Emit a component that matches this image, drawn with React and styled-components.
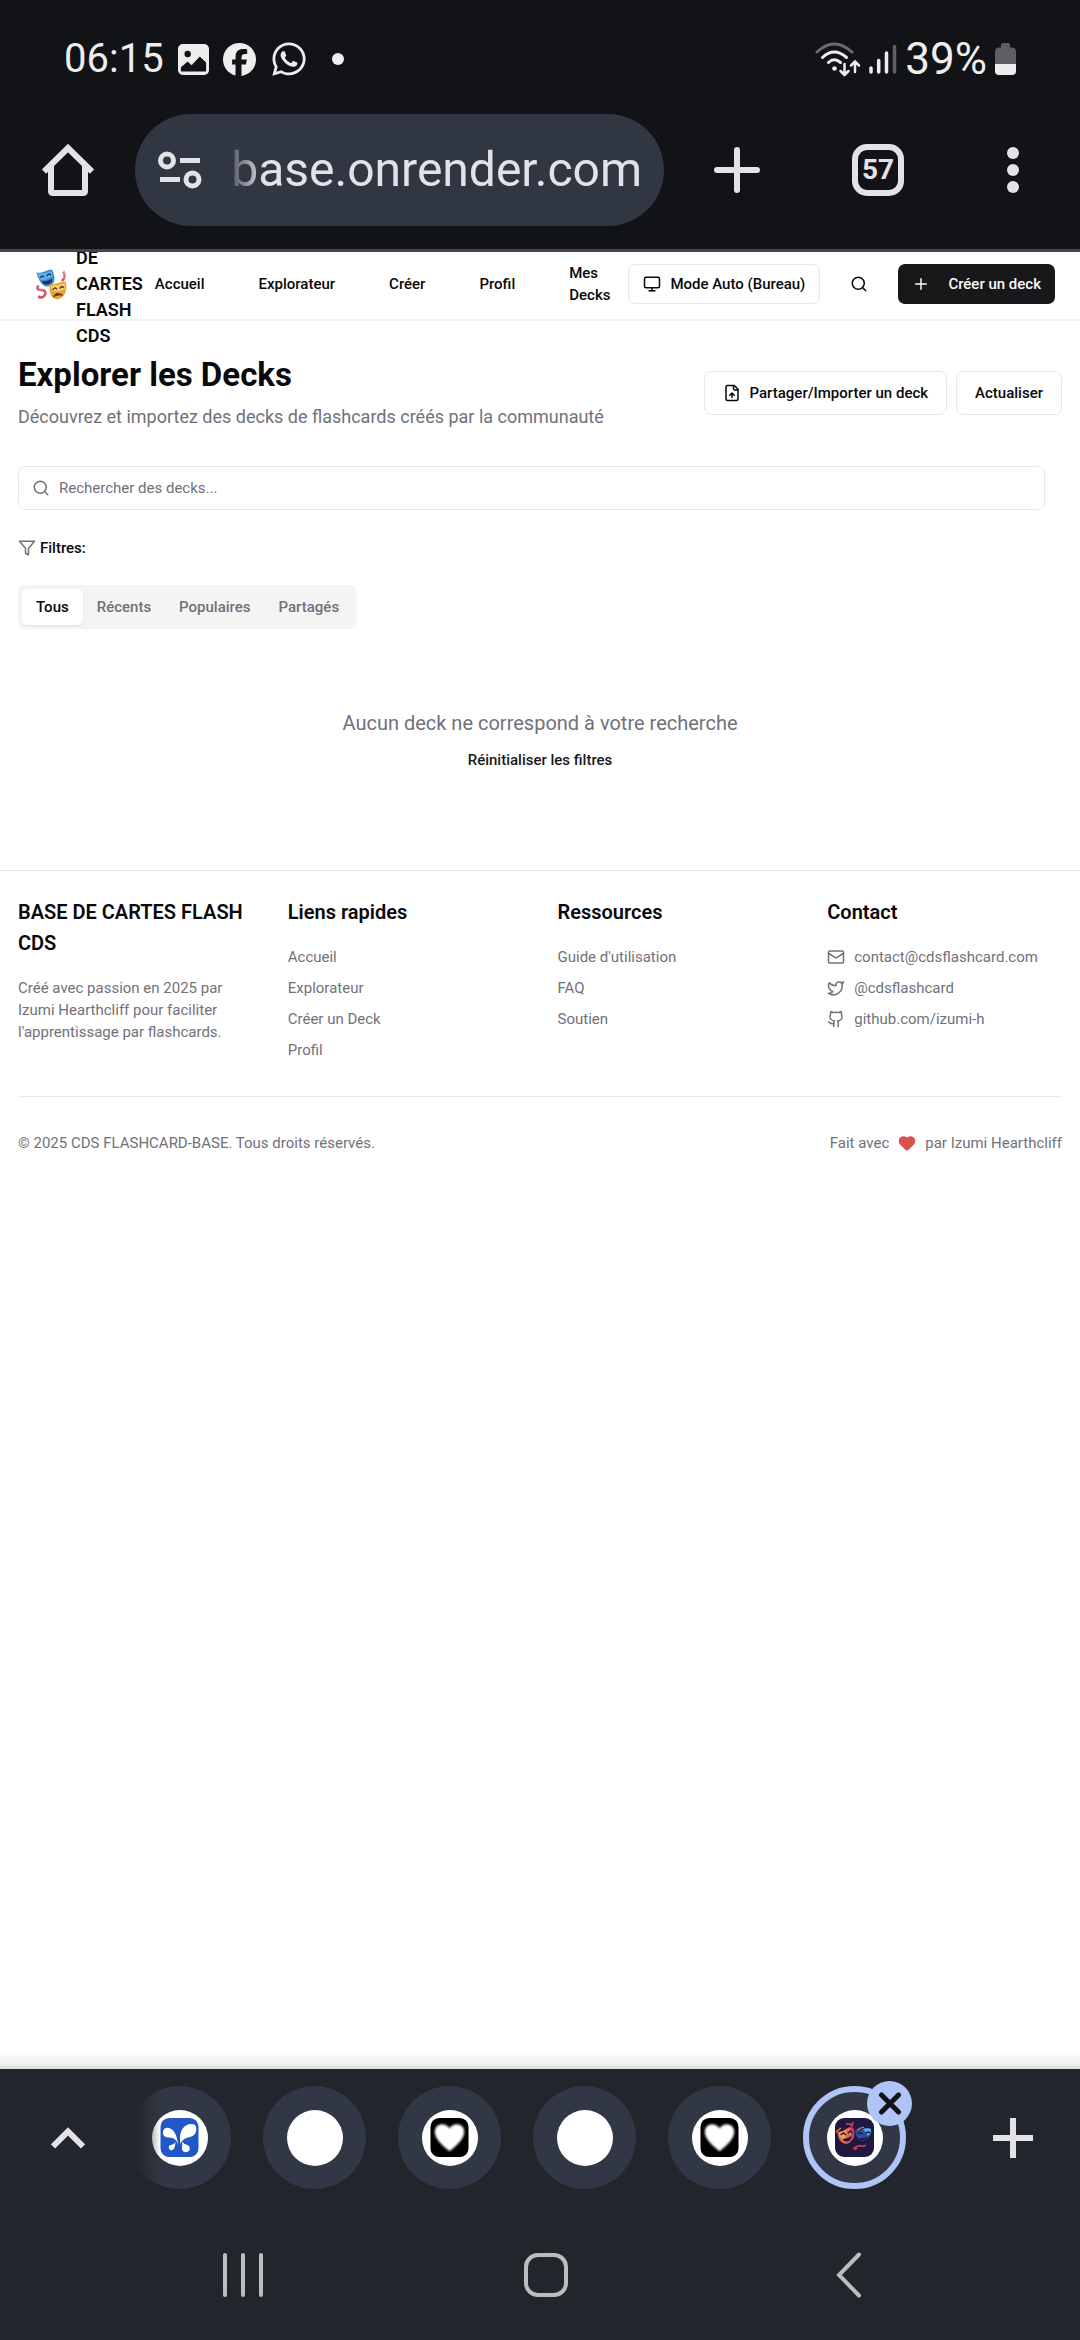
import React from "react";
import styled, { createGlobalStyle, css } from "styled-components";
import { Monitor, Search, Plus, Mail, Twitter, Github, Heart } from "lucide-react";
import { FaFacebook, FaWhatsapp } from "react-icons/fa6";

const ink = "#09090b";
const muted = "#71717a";
const line = "#e8e8ea";

const GlobalStyle = createGlobalStyle`
  *, *::before, *::after { box-sizing: border-box; }
  body { margin: 0; background: #fff; }
  body, button, input { font-family: Roboto, "Liberation Sans", sans-serif; }
  h1, h2, p, ul { margin: 0; padding: 0; }
  ul { list-style: none; }
  a { color: inherit; text-decoration: none; }
  button { margin: 0; padding: 0; border: 0; background: none; color: inherit; cursor: pointer; }
  svg { display: block; flex: none; }
`;

const Screen = styled.div`
  display: flex;
  flex-direction: column;
  min-height: 100vh;
  color: ${ink};
  font-size: 15px;
  line-height: 22px;
`;

/* Phone status bar and browser toolbar */

const Chrome = styled.div`
  background: #121317;
  color: #e3e2e9;
  border-bottom: 3px solid #45464d;
`;

const StatusBar = styled.div`
  display: flex;
  align-items: center;
  justify-content: space-between;
  height: 114px;
  padding: 4px 64px 0;
  color: #eeeeee;
`;

const StatusGroup = styled.div`
  display: flex;
  align-items: center;
  gap: ${(p) => p.$gap}px;
`;

const StatusText = styled.span`
  font-size: ${(p) => (p.$large ? 44 : 40)}px;
  line-height: 48px;
`;

const Toolbar = styled.div`
  display: flex;
  align-items: center;
  padding-bottom: 23px;
`;

const Slot = styled.button`
  display: flex;
  flex: none;
  align-items: center;
  justify-content: center;
  width: ${(p) => p.$width}px;
  height: 112px;
`;

const AddressBar = styled.div`
  display: flex;
  flex: 1;
  align-items: center;
  justify-content: space-between;
  min-width: 0;
  height: 112px;
  padding: 0 22px;
  border-radius: 56px;
  background: #313742;
`;

const Url = styled.span`
  padding-left: 8px;
  font-size: 48px;
  line-height: 64px;
  mask-image: linear-gradient(to right, transparent, #000 42px);
`;

const TabCount = styled.span`
  display: flex;
  align-items: center;
  justify-content: center;
  width: 52px;
  height: 52px;
  border: 6px solid #e3e2e9;
  border-radius: 15px;
  color: #e3e2e9;
  font-size: 28px;
  line-height: 32px;
  font-weight: 700;
`;

/* Web page */

const Page = styled.div`
  flex: 1;
  overflow: hidden;
  background: #fff;
`;

const Header = styled.header`
  display: flex;
  align-items: center;
  height: 69px;
  padding: 0 25px 3px 36px;
  border-bottom: 2px solid #f3f3f4;
`;

const Brand = styled.a`
  display: flex;
  flex: none;
  align-items: center;
  gap: 9px;
`;

const BrandName = styled.span`
  width: min-content;
  font-size: 18px;
  line-height: 26px;
  font-weight: 600;
`;

const Nav = styled.nav`
  display: flex;
  flex: 1;
  align-items: center;
  gap: 54px;
  min-width: 0;
  margin: 0 12px;
  font-weight: 500;
`;

const HeaderActions = styled.div`
  display: flex;
  align-items: center;
  gap: 18px;
`;

const outlined = css`
  border: 1px solid ${line};
  background: #fff;
  color: ${ink};
`;

const Button = styled.button`
  display: flex;
  flex: none;
  align-items: center;
  justify-content: center;
  gap: ${(p) => p.$gap || 9}px;
  height: ${(p) => (p.$large ? 44 : 40)}px;
  padding: 0 ${(p) => (p.$large ? 18 : 14)}px;
  border-radius: 7px;
  background: #18181b;
  color: #fafafa;
  font-size: 15px;
  line-height: 22px;
  font-weight: 500;
  white-space: nowrap;
  ${(p) => p.$outline && outlined}
`;

const IconButton = styled.button`
  display: flex;
  align-items: center;
  justify-content: center;
  width: 42px;
  height: 40px;
`;

const Main = styled.main`
  padding: 34px 18px 99px;
`;

const TitleRow = styled.div`
  display: flex;
  align-items: center;
  justify-content: space-between;
`;

const Title = styled.h1`
  font-size: 33px;
  line-height: 40px;
  font-weight: 700;
`;

const Subtitle = styled.p`
  margin-top: 9px;
  color: ${muted};
  font-size: 18px;
  line-height: 26px;
`;

const TitleActions = styled.div`
  display: flex;
  gap: 9px;
`;

const SearchField = styled.label`
  display: flex;
  align-items: center;
  gap: 9px;
  height: 44px;
  margin: 36px 17px 0 0;
  padding: 0 13px;
  border: 1px solid ${line};
  border-radius: 7px;
  color: ${muted};
`;

const SearchInput = styled.input`
  flex: 1;
  min-width: 0;
  padding: 0;
  border: 0;
  outline: 0;
  background: none;
  color: ${ink};
  font-size: 15px;
  line-height: 22px;
  &::placeholder { color: ${muted}; opacity: 1; }
`;

const FilterLabel = styled.div`
  display: flex;
  align-items: center;
  gap: 4px;
  margin: 27px 0 26px;
  font-weight: 500;
  svg { color: ${muted}; }
`;

const Tabs = styled.div`
  display: flex;
  align-items: center;
  width: fit-content;
  height: 44px;
  padding: 0 4px;
  border-radius: 7px;
  background: #f4f4f5;
`;

const Tab = styled.button`
  height: 36px;
  padding: 0 14px;
  border-radius: 5px;
  color: ${(p) => (p.$active ? ink : muted)};
  background: ${(p) => (p.$active ? "#fff" : "none")};
  box-shadow: ${(p) => (p.$active ? "0 1px 2px rgba(0, 0, 0, 0.08)" : "none")};
  font-size: 15px;
  line-height: 22px;
  font-weight: 500;
`;

const Empty = styled.div`
  display: flex;
  flex-direction: column;
  align-items: center;
  gap: 10px;
  padding-top: 79px;
`;

const EmptyText = styled.p`
  color: ${muted};
  font-size: 20px;
  line-height: 31px;
`;

const TextButton = styled.button`
  color: #18181b;
  font-size: 15px;
  line-height: 22px;
  font-weight: 500;
`;

const Footer = styled.footer`
  padding: 26px 18px;
  border-top: 1px solid ${line};
  color: ${muted};
`;

const FooterGrid = styled.div`
  display: grid;
  grid-template-columns: repeat(4, 1fr);
  gap: 35px;
`;

const FooterHeading = styled.h2`
  margin-bottom: 18px;
  color: ${ink};
  font-size: 20px;
  line-height: 31px;
  font-weight: 600;
`;

const LinkList = styled.ul`
  display: flex;
  flex-direction: column;
  gap: 9px;
`;

const FooterLink = styled.a`
  display: flex;
  align-items: center;
  gap: 9px;
`;

const FooterBottom = styled.div`
  display: flex;
  justify-content: space-between;
  margin-top: 35px;
  padding-top: 35px;
  border-top: 1px solid ${line};
`;

const Credit = styled.p`
  display: flex;
  align-items: center;
  gap: 9px;
  svg { color: #dc514d; }
`;

/* Browser tab strip and system navigation */

const PageShadow = styled.div`
  height: 19px;
  background: linear-gradient(to bottom, #fff, #f2f2f2 70%, #d9d9d9);
`;

const BottomBar = styled.div`
  background: #22252c;
  color: #e3e2e9;
`;

const TabStrip = styled.div`
  display: flex;
  align-items: center;
  height: 137px;
`;

const StripButton = styled.button`
  display: flex;
  flex: none;
  align-items: center;
  justify-content: center;
  width: ${(p) => p.$width}px;
  height: 103px;
  padding-left: ${(p) => p.$inset || 0}px;
`;

const StripTabs = styled.div`
  display: flex;
  flex: 1;
  align-items: center;
  gap: 32px;
  min-width: 0;
  height: 137px;
  mask-image: linear-gradient(to right, transparent 6px, #000 32px);
`;

const StripTab = styled.div`
  position: relative;
  display: flex;
  flex: none;
  align-items: center;
  justify-content: center;
  width: 103px;
  height: 103px;
  border-radius: 50%;
  background: #313744;
  border: ${(p) => (p.$active ? "6px solid #b0c4f8" : "0")};
`;

const Favicon = styled.button`
  display: flex;
  align-items: center;
  justify-content: center;
  width: 56px;
  height: 56px;
  border-radius: 50%;
  background: #fff;
`;

const CloseBadge = styled.button`
  position: absolute;
  top: -11px;
  right: -12px;
  display: flex;
  align-items: center;
  justify-content: center;
  width: 45px;
  height: 45px;
  border-radius: 50%;
  background: #b0c4f8;
  color: #121317;
`;

const SystemNav = styled.nav`
  display: flex;
  padding: 10px 80px 7px 92px;
  color: #bdbdbf;
`;

const SystemButton = styled.button`
  display: flex;
  flex: 1;
  align-items: center;
  justify-content: center;
  height: 117px;
`;

/* Icons */

const GalleryIcon = () => (
  <svg width="31" height="31" viewBox="0 0 32 32" fill="currentColor">
    <path fillRule="evenodd" d="M5 0h22a5 5 0 0 1 5 5v22a5 5 0 0 1-5 5H5a5 5 0 0 1-5-5V5a5 5 0 0 1 5-5Zm5 7a3.300 3.300 0 1 0 0 6.600a3.300 3.300 0 0 0 0-6.600ZM3 24v4.500h26V19l-6.500-6-8.500 9-4-4Z" />
  </svg>
);

const WifiIcon = () => (
  <svg width="46" height="35" viewBox="0 0 46 35" fill="none" stroke="currentColor" strokeWidth="3" strokeLinecap="round">
    <path d="M2 10Q19-6 37 10" stroke="#6b6b6d" />
    <path d="M7.500 15.500Q19 4.500 31.500 15.500M13.500 20.500Q19 15 25.500 20.500" />
    <circle cx="19.500" cy="26.500" r="2.300" fill="currentColor" stroke="none" />
    <path d="M29.500 22v11m-4-4 4 4 4-4M40 30V20m-4 3.500 4-4 4 4" strokeWidth="2.500" />
  </svg>
);

const SignalIcon = () => (
  <svg width="28" height="31" viewBox="0 0 28 31" fill="none" stroke="currentColor" strokeWidth="3.500" strokeLinecap="round">
    <path d="M2 24v4M9.700 16.500V28M17.500 9v19" />
    <path d="M25.500 2.500V28" stroke="#5f5f62" />
  </svg>
);

const BatteryIcon = () => (
  <svg width="21" height="32" viewBox="0 0 21 32">
    <path fill="#5f5f62" d="M6 1.500Q6 0 8 0h5q2 0 2 1.500V4.500h2a4 4 0 0 1 4 4V21H0V8.500a4 4 0 0 1 4-4h2Z" />
    <path fill="currentColor" d="M0 21h21v7a4 4 0 0 1-4 4H4a4 4 0 0 1-4-4Z" />
  </svg>
);

const DotIcon = () => (
  <svg width="22" height="12" viewBox="0 0 22 12">
    <circle cx="16" cy="6" r="6" fill="currentColor" />
  </svg>
);

const HomeIcon = () => (
  <svg width="52" height="52" viewBox="0 0 52 52" fill="none" stroke="currentColor" strokeWidth="6" strokeLinejoin="round">
    <path d="M2 27.500 26 4l24 23.500" strokeLinejoin="miter" />
    <path d="M9 22v25q0 2 2 2h30q2 0 2-2V22" />
  </svg>
);

const SiteSettingsIcon = () => (
  <svg width="46" height="38" viewBox="0 0 46 38" fill="none" stroke="currentColor" strokeWidth="5">
    <circle cx="10" cy="9.500" r="6.500" />
    <path d="M23 9.500h20M3 28.500h20" />
    <circle cx="35.500" cy="28.500" r="6.500" />
  </svg>
);

const NewTabIcon = () => (
  <svg width="46" height="46" viewBox="0 0 46 46" stroke="currentColor" strokeWidth="6" strokeLinecap="round">
    <path d="M23 3v40M3 23h40" />
  </svg>
);

const MoreIcon = () => (
  <svg width="12" height="46" viewBox="0 0 12 46" fill="currentColor">
    <circle cx="6" cy="6" r="6" />
    <circle cx="6" cy="23" r="6" />
    <circle cx="6" cy="40" r="6" />
  </svg>
);

const MasksLogo = () => (
  <svg width="31" height="31" viewBox="0 0 31 31" fill="none">
    <path d="M27.500 2.500Q30 8 26 12M2.500 16.500Q-.5 21 5 21t4 4.500-7 2" stroke="#cf5a6a" strokeWidth="2.600" />
    <path d="M28.500 1.500 27.500 9M3 18q-1 2.500 3 2.500" stroke="#eda0aa" strokeWidth="1.200" />
    <path d="M.5 3.500Q4 4.500 8.500 2.500T16 .5q3.500 7 2 12.500-2 4-6.500 4.500-5 0-8-6Q1 7.500.5 3.500Z" fill="#3b8ad6" />
    <path d="M1.500 4.500Q8 5 15.200 2q1.500 3 1.500 5.500Q9 12 4 10.500 2 7.500 1.500 4.500Z" fill="#67afe9" />
    <path d="M4.200 8.800 6 7l2.500 1M10.800 7l1.700-2 2.700.8" stroke="#12375f" strokeWidth="1.300" />
    <path d="M5.500 12.500q6 0 10.500-3 .5 5.500-4.500 6-4 .5-6-3Z" fill="#173963" />
    <path d="M13.500 15.500q4 0 8-1.500t8-1.500q2 7-.5 12t-8 6q-5-1-6.500-5.500t-1-9.500Z" fill="#eba43a" />
    <path d="M15 16.500q7 .5 13.500-2.500.8 4 0 6.500-6 3-12.500 1Z" fill="#fad074" />
    <path d="m16.500 20.800 2.500-2 2 1.500M23.500 19.500l2-2 2.500 1" stroke="#64381a" strokeWidth="1.400" />
    <path d="M17.500 27.500q2.500-4.500 6-2.500 2.500 0 3 1-4.500-1-9 1.500Z" fill="#5b2f1a" stroke="#5b2f1a" />
  </svg>
);

const FileUpIcon = () => (
  <svg width="18" height="18" viewBox="0 0 24 24" fill="none" stroke="currentColor" strokeWidth="2" strokeLinecap="round" strokeLinejoin="round">
    <path d="M15 2H6a2 2 0 0 0-2 2v16a2 2 0 0 0 2 2h12a2 2 0 0 0 2-2V7Z" />
    <path d="M14 2v4a2 2 0 0 0 2 2h4M12 12v6M15 15l-3-3-3 3" />
  </svg>
);

const FilterIcon = () => (
  <svg width="18" height="18" viewBox="0 0 24 24" fill="none" stroke="currentColor" strokeWidth="2" strokeLinecap="round" strokeLinejoin="round">
    <polygon points="22 3 2 3 10 12.460 10 19 14 21 14 12.460 22 3" />
  </svg>
);

const ButterflyFavicon = () => (
  <svg width="39" height="39" viewBox="0 0 39 40">
    <rect width="39" height="40" rx="9" fill="#2257c8" />
    <g fill="#fff">
      <path d="M18 27Q16 20 9 20 2.500 20 2.500 14.500 3 10 7.500 10 16 11 18 27Z" />
      <path d="M20.500 27Q18 10 29 6.500q7-1.500 7.800 4Q37 18 30 19.500 22 21 20.500 27Z" />
      <path d="M15.500 24.500Q14.500 33 11.500 33T8.500 29.500Q9 27.500 11.500 27.500 14 27 15.500 24.500Z" />
      <path d="M22.500 24q1.500 3 4.500 3.500 3.500 1 3 4.500-1 3-4.500 3-3-.5-3.500-3Z" />
    </g>
  </svg>
);

const HeartShape = styled.path`
  filter: blur(1px);
`;

const HeartFavicon = () => (
  <svg width="39" height="39" viewBox="0 0 39 40">
    <rect width="39" height="40" rx="9" fill="#000" />
    <HeartShape d="M19.500 34Q4 22 4.500 14 5 7 11.500 6.500q5 0 8 4 3-4 8-4Q34 7 34.500 14 35 22 19.500 34Z" fill="#fff" />
  </svg>
);

const MasksFavicon = () => (
  <svg width="39" height="39" viewBox="0 0 39 39" fill="none">
    <rect width="39" height="39" rx="9" fill="#21183f" />
    <path d="M3 14q4 0 8-3t7-1q2 5 0 10t-7 6q-5-1-7-5T3 14Z" fill="#e8654f" />
    <path d="M3.500 14.500q4 0 8-3l-2 12q-4-2-6-9Z" fill="#f6a34d" />
    <path d="M15 10q3 5 0 14 4-3 4.500-7 .5-4-1.500-7Z" fill="#cf3b69" />
    <path d="M20 12q4 1 8-1t8 0q1 5-3 9t-8 2q-4-2-5-10Z" fill="#2e4fa0" />
    <path d="M28 11q4-1.500 8 0 0 5-3 7-2-4-5-7Z" fill="#45b6ee" />
    <path d="m5.500 17 3-2 2.500 2M13 15l2.500-2 2 2M22.500 16l2-1.500 3 1.500M31 15l2-1 2 1" stroke="#21183f" strokeWidth="1.500" />
    <path d="M7.500 20.500q5 1 9-3-.5 6-4.500 6t-4.500-3ZM23 20q6 1 9.500-2-1 4-5 4t-4.500-2Z" fill="#21183f" />
    <path d="m11 6 4 0 2 2 1-4M18 31q5-4 8-3t5-1M20 32l2-2" stroke="#dc3d62" strokeWidth="1.500" />
    <path d="M2 15v-2l4-3M22 12l4-2 3-1" stroke="#f28b49" strokeWidth="1.200" />
  </svg>
);

const ChevronUpIcon = () => (
  <svg width="34" height="22" viewBox="0 0 34 22" fill="none" stroke="currentColor" strokeWidth="6">
    <path d="m2 19.500 15-15 15 15" />
  </svg>
);

const StripPlusIcon = () => (
  <svg width="40" height="40" viewBox="0 0 40 40" stroke="currentColor" strokeWidth="6">
    <path d="M20 0v40M0 20h40" />
  </svg>
);

const CloseIcon = () => (
  <svg width="24" height="24" viewBox="0 0 24 24" stroke="currentColor" strokeWidth="5" strokeLinecap="round">
    <path d="m3.500 3 17 17M20.500 3 3.500 20" />
  </svg>
);

const RecentsIcon = () => (
  <svg width="42" height="44" viewBox="0 0 42 44" stroke="currentColor" strokeWidth="4" strokeLinecap="round">
    <path d="M3 2v40M21 2v40M39 2v40" />
  </svg>
);

const SystemHomeIcon = () => (
  <svg width="44" height="44" viewBox="0 0 44 44" fill="none" stroke="currentColor" strokeWidth="4">
    <rect x="2" y="2" width="40" height="40" rx="12" />
  </svg>
);

const BackIcon = () => (
  <svg width="26" height="46" viewBox="0 0 26 46" fill="none" stroke="currentColor" strokeWidth="4" strokeLinecap="round">
    <path d="M23 2.500 3 23l20 20.500" />
  </svg>
);

const navLinks = ["Accueil", "Explorateur", "Créer", "Profil", "Mes Decks"];
const filters = ["Tous", "Récents", "Populaires", "Partagés"];
const footerColumns = [
  { title: "Liens rapides", links: [{ text: "Accueil" }, { text: "Explorateur" }, { text: "Créer un Deck" }, { text: "Profil" }] },
  { title: "Ressources", links: [{ text: "Guide d'utilisation" }, { text: "FAQ" }, { text: "Soutien" }] },
  {
    title: "Contact",
    links: [
      { text: "contact@cdsflashcard.com", Icon: Mail },
      { text: "@cdsflashcard", Icon: Twitter },
      { text: "github.com/izumi-h", Icon: Github },
    ],
  },
];
const openTabs = [ButterflyFavicon, null, HeartFavicon, null, HeartFavicon, MasksFavicon];

export default function App() {
  const [filter, setFilter] = React.useState("Tous");

  return (
    <Screen>
      <GlobalStyle />

      <Chrome>
        <StatusBar>
          <StatusGroup $gap={14}>
            <StatusText>06:15</StatusText>
            <GalleryIcon />
            <FaFacebook size={33} />
            <FaWhatsapp size={38} />
            <DotIcon />
          </StatusGroup>
          <StatusGroup $gap={8}>
            <WifiIcon />
            <SignalIcon />
            <StatusText $large>39%</StatusText>
            <BatteryIcon />
          </StatusGroup>
        </StatusBar>
        <Toolbar>
          <Slot $width={135} aria-label="Page d'accueil"><HomeIcon /></Slot>
          <AddressBar>
            <SiteSettingsIcon />
            <Url>base.onrender.com</Url>
          </AddressBar>
          <Slot $width={146} aria-label="Nouvel onglet"><NewTabIcon /></Slot>
          <Slot $width={136} aria-label="Onglets"><TabCount>57</TabCount></Slot>
          <Slot $width={134} aria-label="Menu"><MoreIcon /></Slot>
        </Toolbar>
      </Chrome>

      <Page>
        <Header>
          <Brand href="#">
            <MasksLogo />
            <BrandName>BASE DE CARTES FLASH CDS</BrandName>
          </Brand>
          <Nav>
            {navLinks.map((text) => <a href="#" key={text}>{text}</a>)}
          </Nav>
          <HeaderActions>
            <Button $outline><Monitor size={18} />Mode Auto (Bureau)</Button>
            <IconButton aria-label="Rechercher"><Search size={18} /></IconButton>
            <Button $gap={18}><Plus size={18} />Créer un deck</Button>
          </HeaderActions>
        </Header>

        <Main>
          <TitleRow>
            <div>
              <Title>Explorer les Decks</Title>
              <Subtitle>Découvrez et importez des decks de flashcards créés par la communauté</Subtitle>
            </div>
            <TitleActions>
              <Button $outline $large><FileUpIcon />Partager/Importer un deck</Button>
              <Button $outline $large>Actualiser</Button>
            </TitleActions>
          </TitleRow>
          <SearchField>
            <Search size={18} />
            <SearchInput type="text" placeholder="Rechercher des decks..." aria-label="Rechercher des decks" />
          </SearchField>
          <FilterLabel><FilterIcon />Filtres:</FilterLabel>
          <Tabs role="tablist">
            {filters.map((text) => (
              <Tab key={text} role="tab" $active={text === filter} aria-selected={text === filter} onClick={() => setFilter(text)}>
                {text}
              </Tab>
            ))}
          </Tabs>
          <Empty>
            <EmptyText>Aucun deck ne correspond à votre recherche</EmptyText>
            <TextButton onClick={() => setFilter("Tous")}>Réinitialiser les filtres</TextButton>
          </Empty>
        </Main>

        <Footer>
          <FooterGrid>
            <div>
              <FooterHeading>BASE DE CARTES FLASH CDS</FooterHeading>
              <p>Créé avec passion en 2025 par Izumi Hearthcliff pour faciliter l'apprentissage par flashcards.</p>
            </div>
            {footerColumns.map(({ title, links }) => (
              <div key={title}>
                <FooterHeading>{title}</FooterHeading>
                <LinkList>
                  {links.map(({ text, Icon }) => (
                    <li key={text}>
                      <FooterLink href="#">{Icon && <Icon size={18} />}{text}</FooterLink>
                    </li>
                  ))}
                </LinkList>
              </div>
            ))}
          </FooterGrid>
          <FooterBottom>
            <p>© 2025 CDS FLASHCARD-BASE. Tous droits réservés.</p>
            <Credit>Fait avec <Heart size={18} fill="currentColor" /> par Izumi Hearthcliff</Credit>
          </FooterBottom>
        </Footer>
      </Page>

      <PageShadow />
      <BottomBar>
        <TabStrip>
          <StripButton $width={128} $inset={8} aria-label="Afficher les onglets"><ChevronUpIcon /></StripButton>
          <StripTabs>
            {openTabs.map((Icon, i) => {
              const active = i === openTabs.length - 1;
              return (
                <StripTab key={i} $active={active}>
                  <Favicon aria-label={`Onglet ${i + 1}`}>{Icon && <Icon />}</Favicon>
                  {active && <CloseBadge aria-label="Fermer l'onglet"><CloseIcon /></CloseBadge>}
                </StripTab>
              );
            })}
          </StripTabs>
          <StripButton $width={134} aria-label="Ajouter un onglet"><StripPlusIcon /></StripButton>
        </TabStrip>
        <SystemNav>
          <SystemButton aria-label="Récents"><RecentsIcon /></SystemButton>
          <SystemButton aria-label="Accueil système"><SystemHomeIcon /></SystemButton>
          <SystemButton aria-label="Retour"><BackIcon /></SystemButton>
        </SystemNav>
      </BottomBar>
    </Screen>
  );
}
